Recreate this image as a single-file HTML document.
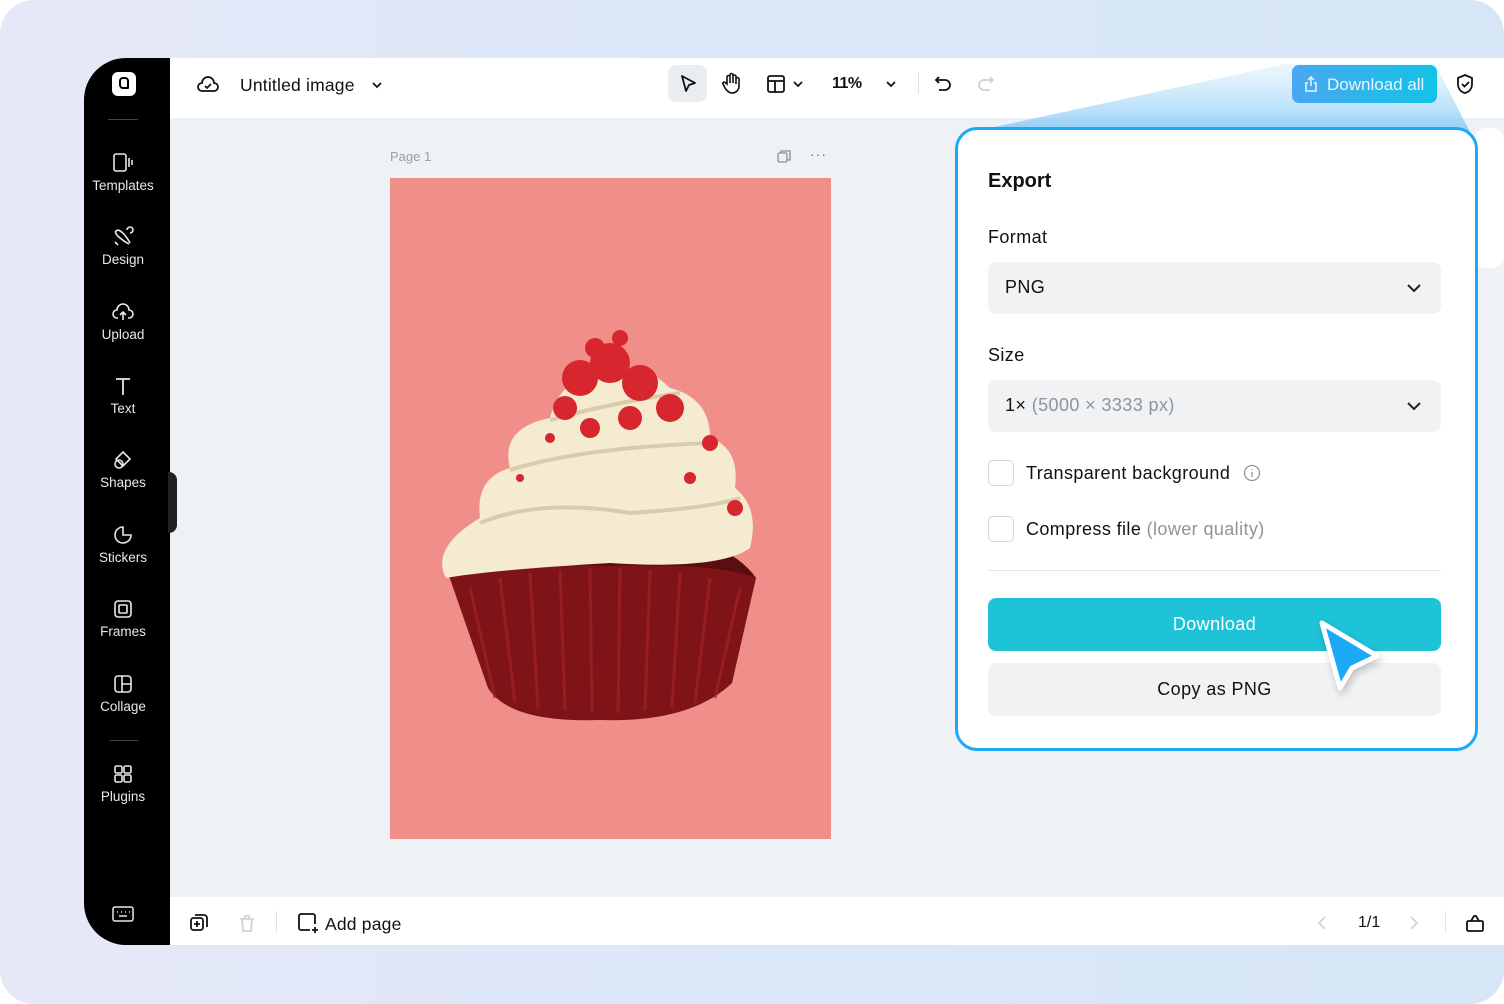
<!DOCTYPE html><html><head><meta charset="utf-8"><style>
*{box-sizing:border-box;margin:0;padding:0}
html{background:#fff}
body{width:1504px;height:1004px;overflow:hidden;font-family:"Liberation Sans",sans-serif;background:linear-gradient(90deg,#e6e8f7,#dbe8f8 50%,#d6e6f6);position:relative;border-radius:34px}
.abs{position:absolute}
.app{left:84px;top:58px;width:1420px;height:887px;border-radius:42px 0 0 42px;overflow:hidden;background:#eef1f5}
.side{left:0;top:0;width:86px;height:887px;background:#000;color:#e8e8e8}
.si{position:absolute;left:0;width:78px;text-align:center;font-size:13.5px}
.si svg{display:block;margin:0 auto 4px}
.top{left:86px;top:0;width:1334px;height:60px;background:#fff}
.bot{left:86px;top:839px;width:1334px;height:48px;background:#fff}
.t{font-size:17px;color:#111;letter-spacing:.2px}
.p{font-size:18px;color:#111;letter-spacing:.4px}
</style></head><body>
<div class="abs app">
 <div class="abs side">
  <div class="abs" style="left:28px;top:14px;width:24px;height:24px;background:#fff;border-radius:6px"><div class="abs" style="left:7px;top:5px;width:10px;height:12px;border:2.5px solid #000;border-radius:4px 4px 1px 4px"></div></div>
  <div class="abs" style="left:24px;top:61px;width:30px;height:1px;background:#444"></div>
  <div class="si" style="top:94px"><svg width="24" height="22" viewBox="0 0 24 22" fill="none" stroke="#e8e8e8" stroke-width="1.6"><rect x="3" y="2" width="12" height="17" rx="2"/><path d="M18 6v9M21 8v5"/></svg>Templates</div>
  <div class="si" style="top:168px"><svg width="24" height="22" viewBox="0 0 24 22" fill="none" stroke="#e8e8e8" stroke-width="1.6"><path d="M5 5c4-4 12 8 14 12M5 5c-3 3 9 11 13 13M16 4a3 3 0 1 1 3 3M4 16l3 3"/></svg>Design</div>
  <div class="si" style="top:243px"><svg width="24" height="22" viewBox="0 0 24 22" fill="none" stroke="#e8e8e8" stroke-width="1.6"><path d="M7 17H6a4 4 0 0 1 0-8 6 6 0 0 1 12 0 4 4 0 0 1 0 8h-1M12 19v-8M9 14l3-3 3 3"/></svg>Upload</div>
  <div class="si" style="top:317px"><svg width="24" height="22" viewBox="0 0 24 22" fill="none" stroke="#e8e8e8" stroke-width="1.8"><path d="M5 4h14M12 4v16"/></svg>Text</div>
  <div class="si" style="top:391px"><svg width="24" height="22" viewBox="0 0 24 22" fill="none" stroke="#e8e8e8" stroke-width="1.6"><path d="M12 3l7 7-7 7-7-7z"/><circle cx="8" cy="15" r="4"/></svg>Shapes</div>
  <div class="si" style="top:466px"><svg width="24" height="22" viewBox="0 0 24 22" fill="none" stroke="#e8e8e8" stroke-width="1.6"><path d="M12 3a8 8 0 1 0 8 8h-8z"/></svg>Stickers</div>
  <div class="si" style="top:540px"><svg width="24" height="22" viewBox="0 0 24 22" fill="none" stroke="#e8e8e8" stroke-width="1.6"><rect x="4" y="3" width="16" height="16" rx="3"/><rect x="8" y="7" width="8" height="8" rx="1"/></svg>Frames</div>
  <div class="si" style="top:615px"><svg width="24" height="22" viewBox="0 0 24 22" fill="none" stroke="#e8e8e8" stroke-width="1.6"><rect x="4" y="3" width="16" height="16" rx="3"/><path d="M11 3v16M11 11h9"/></svg>Collage</div>
  <div class="abs" style="left:26px;top:682px;width:28px;height:1px;background:#444"></div>
  <div class="si" style="top:705px"><svg width="24" height="22" viewBox="0 0 24 22" fill="none" stroke="#e8e8e8" stroke-width="1.6"><rect x="4" y="3" width="7" height="7" rx="1.5"/><rect x="13" y="3" width="7" height="7" rx="1.5"/><rect x="4" y="12" width="7" height="7" rx="1.5"/><rect x="13" y="12" width="7" height="7" rx="1.5"/></svg>Plugins</div>
  <svg class="abs" style="left:27px;top:846px" width="24" height="20" viewBox="0 0 24 20" fill="none" stroke="#e8e8e8" stroke-width="1.5"><rect x="2" y="3" width="20" height="14" rx="2"/><path d="M6 8h1M10 8h1M14 8h1M18 8h1M8 12h8"/></svg>
 </div>
 <div class="abs" style="left:84px;top:414px;width:9px;height:61px;background:#222;border-radius:0 8px 8px 0"></div>
 <div class="abs top">
  <svg class="abs" style="left:26px;top:15px" width="24" height="22" viewBox="0 0 24 22" fill="none" stroke="#111" stroke-width="1.8"><path d="M7 18H6a4 4 0 0 1 0-8 6 6 0 0 1 12 0 4 4 0 0 1 0 8z"/><path d="M9 13l2 2 4-4"/></svg>
  <div class="abs t" style="left:70px;top:17px;font-size:17.5px">Untitled image</div>
  <svg class="abs" style="left:200px;top:20px" width="14" height="14" viewBox="0 0 14 14" fill="none" stroke="#111" stroke-width="1.8"><path d="M3 5l4 4 4-4"/></svg>
  <div class="abs" style="left:498px;top:7px;width:39px;height:37px;background:#e9edf1;border-radius:8px"></div>
  <svg class="abs" style="left:507px;top:15px" width="22" height="22" viewBox="0 0 22 22" fill="none" stroke="#111" stroke-width="1.8" stroke-linejoin="round"><path d="M5 3l13 7-6 2-3 6z"/></svg>
  <svg class="abs" style="left:550px;top:14px" width="22" height="24" viewBox="0 0 22 24" fill="none" stroke="#111" stroke-width="1.6" stroke-linecap="round"><path d="M7 12V5a1.5 1.5 0 0 1 3 0v6V3a1.5 1.5 0 0 1 3 0v8V4.5a1.5 1.5 0 0 1 3 0V12V7a1.5 1.5 0 0 1 3 0v7c0 4-3 7-7 7-3 0-5-2-7-5l-2-4c-.7-1.3 1-2.5 2-1.5z"/></svg>
  <svg class="abs" style="left:595px;top:15px" width="22" height="22" viewBox="0 0 22 22" fill="none" stroke="#111" stroke-width="1.8"><rect x="3" y="3" width="16" height="16" rx="2"/><path d="M3 8h16M10 8v11"/></svg>
  <svg class="abs" style="left:622px;top:20px" width="12" height="12" viewBox="0 0 12 12" fill="none" stroke="#111" stroke-width="1.7"><path d="M2 4l4 4 4-4"/></svg>
  <div class="abs" style="left:662px;top:17px;font-size:16px;color:#111;font-weight:bold;letter-spacing:-.5px">11%</div>
  <svg class="abs" style="left:715px;top:20px" width="12" height="12" viewBox="0 0 12 12" fill="none" stroke="#111" stroke-width="1.7"><path d="M2 4l4 4 4-4"/></svg>
  <div class="abs" style="left:748px;top:14px;width:1px;height:22px;background:#dde1e6"></div>
  <svg class="abs" style="left:762px;top:15px" width="22" height="22" viewBox="0 0 22 22" fill="none" stroke="#111" stroke-width="1.8"><path d="M7 4L4 7l3 3M4 7h9a5 5 0 0 1 0 10H7"/></svg>
  <svg class="abs" style="left:805px;top:15px" width="22" height="22" viewBox="0 0 22 22" fill="none" stroke="#ccd2da" stroke-width="1.8"><path d="M15 4l3 3-3 3M18 7H9a5 5 0 0 0 0 10h6"/></svg>
  <svg class="abs" style="left:1284px;top:14px" width="22" height="24" viewBox="0 0 22 24" fill="none" stroke="#111" stroke-width="1.8"><path d="M11 3l7 3v6c0 5-3 8-7 9-4-1-7-4-7-9V6z"/><path d="M8 12l2.5 2.5L15 10"/></svg>
 </div>
 <div class="abs" style="left:306px;top:91px;font-size:13px;color:#9aa1ab">Page 1</div>
 <svg class="abs" style="left:692px;top:90px" width="16" height="16" viewBox="0 0 16 16" fill="none" stroke="#8a919b" stroke-width="1.3"><rect x="2" y="5" width="9" height="9" rx="1.5"/><path d="M5 5V3h9v9h-3"/></svg>
 <div class="abs" style="left:726px;top:88px;font-size:14px;color:#6a717b;letter-spacing:1px">···</div>
 <div class="abs" style="left:306px;top:120px;width:441px;height:661px;background:#f08e8a"></div>
 <svg class="abs" style="left:306px;top:120px" width="441" height="661" viewBox="0 0 441 661">
  <path d="M58 395 Q110 350 220 358 Q330 350 366 400 L342 505 Q300 545 210 542 Q120 545 98 510 Z" fill="#7e1418"/>
  <path d="M58 395 Q110 350 220 358 Q330 350 366 400 Q330 385 220 388 Q110 385 58 395Z" fill="#5c0d10"/>
  <g stroke="#a12227" stroke-width="3" opacity=".7"><path d="M80 410l25 110M110 400l15 125M140 395l8 135M170 392l5 140M200 390l2 145M230 390l-2 145M260 392l-5 140M290 395l-8 135M320 400l-15 125M350 410l-25 110"/></g>
  <path d="M56 400 Q40 370 90 340 Q85 300 120 290 Q110 250 160 240 Q170 200 210 195 Q250 180 280 210 Q320 220 320 260 Q350 270 345 310 Q370 330 360 370 Q330 392 220 385 Q100 392 56 400Z" fill="#f4ebd0"/>
  <path d="M90 345 Q150 320 240 335 Q320 330 350 320 M120 292 Q190 270 320 265 M160 242 Q220 225 290 215" fill="none" stroke="#d8ccac" stroke-width="4"/>
  <g fill="#d8262e"><circle cx="190" cy="200" r="18"/><circle cx="220" cy="185" r="20"/><circle cx="250" cy="205" r="18"/><circle cx="175" cy="230" r="12"/><circle cx="280" cy="230" r="14"/><circle cx="200" cy="250" r="10"/><circle cx="240" cy="240" r="12"/><circle cx="320" cy="265" r="8"/><circle cx="300" cy="300" r="6"/><circle cx="345" cy="330" r="8"/><circle cx="160" cy="260" r="5"/><circle cx="130" cy="300" r="4"/><circle cx="205" cy="170" r="10"/><circle cx="230" cy="160" r="8"/></g>
 </svg>
 <div class="abs bot">
  <svg class="abs" style="left:18px;top:15px" width="22" height="22" viewBox="0 0 22 22" fill="none" stroke="#111" stroke-width="1.8"><rect x="3" y="6" width="12" height="12" rx="2.5"/><path d="M7 3h9a3 3 0 0 1 3 3v9M9 9v6M6 12h6"/></svg>
  <svg class="abs" style="left:66px;top:15px" width="22" height="22" viewBox="0 0 22 22" fill="none" stroke="#cfd4da" stroke-width="1.8"><path d="M4 7h14M9 7V4h4v3M6 7l1 12h8l1-12"/></svg>
  <div class="abs" style="left:106px;top:14px;width:1px;height:22px;background:#dde1e6"></div>
  <svg class="abs" style="left:126px;top:14px" width="24" height="24" viewBox="0 0 24 24" fill="none" stroke="#111" stroke-width="1.8"><path d="M14 19H5a2 2 0 0 1-2-2V5a2 2 0 0 1 2-2h12a2 2 0 0 1 2 2v8M19 16v6M16 19h6"/></svg>
  <div class="abs t" style="left:155px;top:17px;font-size:17.5px">Add page</div>
  <svg class="abs" style="left:1146px;top:18px" width="14" height="16" viewBox="0 0 14 16" fill="none" stroke="#cfd4da" stroke-width="1.7"><path d="M9 2L3 8l6 6"/></svg>
  <div class="abs" style="left:1188px;top:17px;font-size:16px;color:#111">1/1</div>
  <svg class="abs" style="left:1236px;top:18px" width="14" height="16" viewBox="0 0 14 16" fill="none" stroke="#cfd4da" stroke-width="1.7"><path d="M5 2l6 6-6 6"/></svg>
  <div class="abs" style="left:1275px;top:14px;width:1px;height:22px;background:#dde1e6"></div>
  <svg class="abs" style="left:1294px;top:15px" width="22" height="22" viewBox="0 0 22 22" fill="none" stroke="#111" stroke-width="1.8"><rect x="3" y="9" width="16" height="10" rx="1.5"/><path d="M7 9l3-5h2l3 5"/></svg>
 </div>
 <div class="abs" style="left:1390px;top:70px;width:30px;height:140px;background:#fff;border-radius:12px"></div>
</div>
<svg class="abs" style="left:0;top:0" width="1504" height="1004"><defs><linearGradient id="g" x1="0" y1="0" x2="0" y2="1"><stop offset="0" stop-color="#bfe3fb" stop-opacity=".3"/><stop offset="1" stop-color="#7cc6f7" stop-opacity=".8"/></linearGradient></defs><polygon points="1285,64 1435,64 1470,132 990,128" fill="url(#g)"/></svg>
<div class="abs" style="left:1292px;top:65px;width:145px;height:38px;border-radius:7px;background:linear-gradient(90deg,#4aa7f1,#12c3e6);color:#eaf6ff;font-size:17px;padding:10px 0 0 35px">Download all</div>
<svg class="abs" style="left:1303px;top:75px" width="16" height="18" viewBox="0 0 16 18" fill="none" stroke="#eaf6ff" stroke-width="1.5"><path d="M8 11V2M5 5l3-3 3 3M5 8H3v8h10V8h-2"/></svg>
<div class="abs" style="left:955px;top:127px;width:523px;height:624px;background:#fff;border:3.5px solid #1ba9f5;border-radius:22px"></div>
<div class="abs" style="left:988px;top:170px;font-size:20px;font-weight:bold;color:#111">Export</div>
<div class="abs p" style="left:988px;top:227px">Format</div>
<div class="abs" style="left:988px;top:262px;width:453px;height:52px;background:#f0f2f4;border-radius:8px"></div>
<div class="abs p" style="left:1005px;top:277px">PNG</div>
<svg class="abs" style="left:1405px;top:281px" width="18" height="14" viewBox="0 0 18 14" fill="none" stroke="#222" stroke-width="2"><path d="M3 4l6 6 6-6"/></svg>
<div class="abs p" style="left:988px;top:345px">Size</div>
<div class="abs" style="left:988px;top:380px;width:453px;height:52px;background:#f0f2f4;border-radius:8px"></div>
<div class="abs p" style="left:1005px;top:395px">1× <span style="color:#8e949b">(5000 × 3333 px)</span></div>
<svg class="abs" style="left:1405px;top:399px" width="18" height="14" viewBox="0 0 18 14" fill="none" stroke="#222" stroke-width="2"><path d="M3 4l6 6 6-6"/></svg>
<div class="abs" style="left:988px;top:460px;width:26px;height:26px;border:1.5px solid #d3d7dc;border-radius:5px"></div>
<div class="abs p" style="left:1026px;top:463px">Transparent background</div>
<svg class="abs" style="left:1243px;top:464px" width="18" height="18" viewBox="0 0 18 18" fill="none" stroke="#8e949b" stroke-width="1.3"><circle cx="9" cy="9" r="7.5"/><path d="M9 8v5M9 5v1"/></svg>
<div class="abs" style="left:988px;top:516px;width:26px;height:26px;border:1.5px solid #d3d7dc;border-radius:5px"></div>
<div class="abs p" style="left:1026px;top:519px">Compress file <span style="color:#8e949b">(lower quality)</span></div>
<div class="abs" style="left:988px;top:570px;width:453px;height:1px;background:#e6e9ec"></div>
<div class="abs p" style="left:988px;top:598px;width:453px;height:53px;background:#1ec3d8;border-radius:8px;color:#fff;text-align:center;line-height:53px">Download</div>
<div class="abs p" style="left:988px;top:663px;width:453px;height:53px;background:#f0f2f4;border-radius:8px;text-align:center;line-height:53px">Copy as PNG</div>
<svg class="abs" style="left:1300px;top:600px" width="110" height="110" viewBox="1300 600 110 110"><polygon points="1322,623 1377,656 1352,668 1340,688" fill="#1ea8f8" stroke="#fff" stroke-width="5" stroke-linejoin="round" style="filter:drop-shadow(2px 4px 4px rgba(0,0,0,.2))"/></svg>
</body></html>
